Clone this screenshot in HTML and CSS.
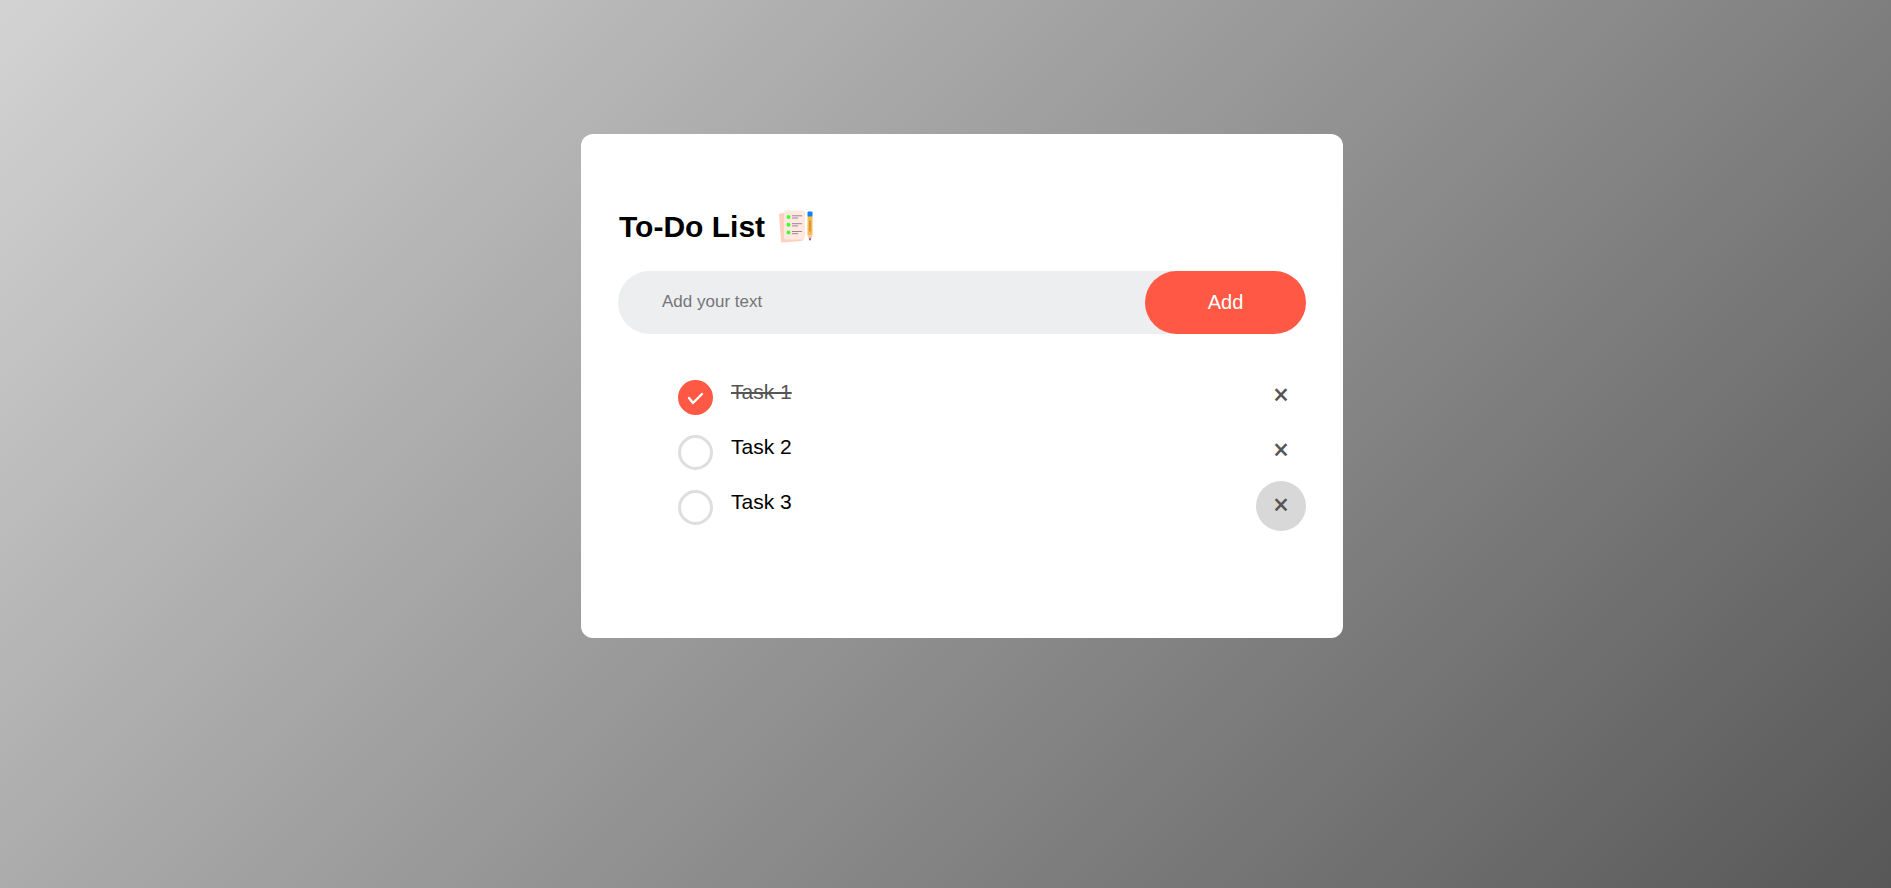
FILE: index.html
```html
<!DOCTYPE html>
<html lang="en">
<head>
<meta charset="utf-8">
<meta name="viewport" content="width=device-width, initial-scale=1">
<title>To-Do List</title>
<link rel="stylesheet" href="styles.css">
</head>
<body>
<main class="page">
  <section class="card">
    <h1 class="title">To-Do List
      <svg class="title-icon" viewBox="0 0 36 36" aria-hidden="true">
        <path d="M1 6.500 Q1 5 2.500 5 L6 4.500 L25 31 L24 32.500 L4.500 34 Q3 34 3 33Z" fill="#ffd0c2"/>
        <rect x="6" y="2" width="21" height="29" rx="2" fill="#ffe8de"/>
        <g fill="#3dff33"><circle cx="10.500" cy="8.500" r="2"/><circle cx="10.500" cy="16.300" r="2"/><circle cx="10.500" cy="24" r="2"/></g>
        <path d="M14 7.300h10M14 9.500h6M14 15.200h10M14 17.400h6M14 23h10M14 25.200h6" stroke="#8d7898" stroke-width="0.900"/>
        <path d="M29.500 7h5v20h-5z" fill="#ffb84d"/>
        <path d="M32 12v11" stroke="#a97832" stroke-width="1"/>
        <rect x="29.500" y="3" width="5" height="5" rx="1" fill="#0a84f5"/>
        <path d="M29.500 27h5l-1.500 4h-2z" fill="#ffc0bd"/>
        <path d="M31 30h2l-1 2.500z" fill="#333"/>
      </svg>
    </h1>
    <form class="entry">
      <input class="entry-input" type="text" placeholder="Add your text" aria-label="New task">
      <button class="entry-add" type="button">Add</button>
    </form>
    <ul class="tasks">
      <li class="task">
        <label class="task-label"><input class="task-check" type="checkbox" checked><span class="task-text">Task 1</span></label>
        <button class="task-remove" type="button" aria-label="Remove Task 1">×</button>
      </li>
      <li class="task">
        <label class="task-label"><input class="task-check" type="checkbox"><span class="task-text">Task 2</span></label>
        <button class="task-remove" type="button" aria-label="Remove Task 2">×</button>
      </li>
      <li class="task">
        <label class="task-label"><input class="task-check" type="checkbox"><span class="task-text">Task 3</span></label>
        <button class="task-remove is-active" type="button" aria-label="Remove Task 3">×</button>
      </li>
    </ul>
  </section>
</main>
</body>
</html>
```
FILE: styles.css
```css
* {
  box-sizing: border-box;
  margin: 0;
  padding: 0;
}

body {
  font-family: "Liberation Sans", Arial, sans-serif;
}

.page {
  min-height: 100vh;
  padding: 134px 0 24px 33px;
  background: linear-gradient(135deg, #d3d3d3, #575757);
}

.card {
  max-width: 762px;
  margin: 0 auto;
  padding: 74px 37px 102px;
  background: #fff;
  border-radius: 12px;
}

.title {
  display: flex;
  align-items: center;
  gap: 13px;
  margin-bottom: 26px;
  padding-left: 1px;
  font-size: 30px;
  line-height: 36px;
}

.title-icon {
  width: 36px;
  height: 37px;
}

.entry {
  display: flex;
  margin-bottom: 37px;
  background: #edeef0;
  border-radius: 32px;
}

.entry-input {
  flex: 1;
  min-width: 0;
  padding: 0 44px 2px;
  border: 0;
  outline: 0;
  background: transparent;
  font: 17px "Liberation Sans", Arial, sans-serif;
}

.entry-input::placeholder {
  color: #757575;
}

.entry-add {
  width: 161px;
  height: 63px;
  border: 0;
  border-radius: 32px;
  background: #ff5945;
  color: #fff;
  font: 20px "Liberation Sans", Arial, sans-serif;
}

.tasks {
  padding-left: 60px;
  list-style: none;
}

.task {
  display: flex;
  justify-content: space-between;
  height: 55px;
}

.task-label {
  display: flex;
  flex: 1;
  gap: 18px;
  padding-top: 9px;
  font-size: 21px;
  line-height: 24px;
}

.task-check {
  appearance: none;
  width: 35px;
  height: 35px;
  border: 3px solid #dedede;
  border-radius: 50%;
}

.task-check:checked {
  border: 0;
  background: #ff5945 url("data:image/svg+xml,%3Csvg xmlns='http://www.w3.org/2000/svg' viewBox='0 0 35 35'%3E%3Cpath d='M11 18l4 5 9-9' fill='none' stroke='white' stroke-width='2.400' stroke-linecap='round' stroke-linejoin='round'/%3E%3C/svg%3E");
}

.task-check:checked + .task-text {
  color: #555;
  text-decoration: line-through;
}

.task-remove {
  width: 50px;
  height: 50px;
  padding-bottom: 4px;
  border: 0;
  border-radius: 50%;
  background: transparent;
  color: #555;
  font: 600 28px "Open Sans", sans-serif;
  line-height: 46px;
}

.task-remove:hover,
.task-remove.is-active {
  background: #d8d8d8;
}
```
